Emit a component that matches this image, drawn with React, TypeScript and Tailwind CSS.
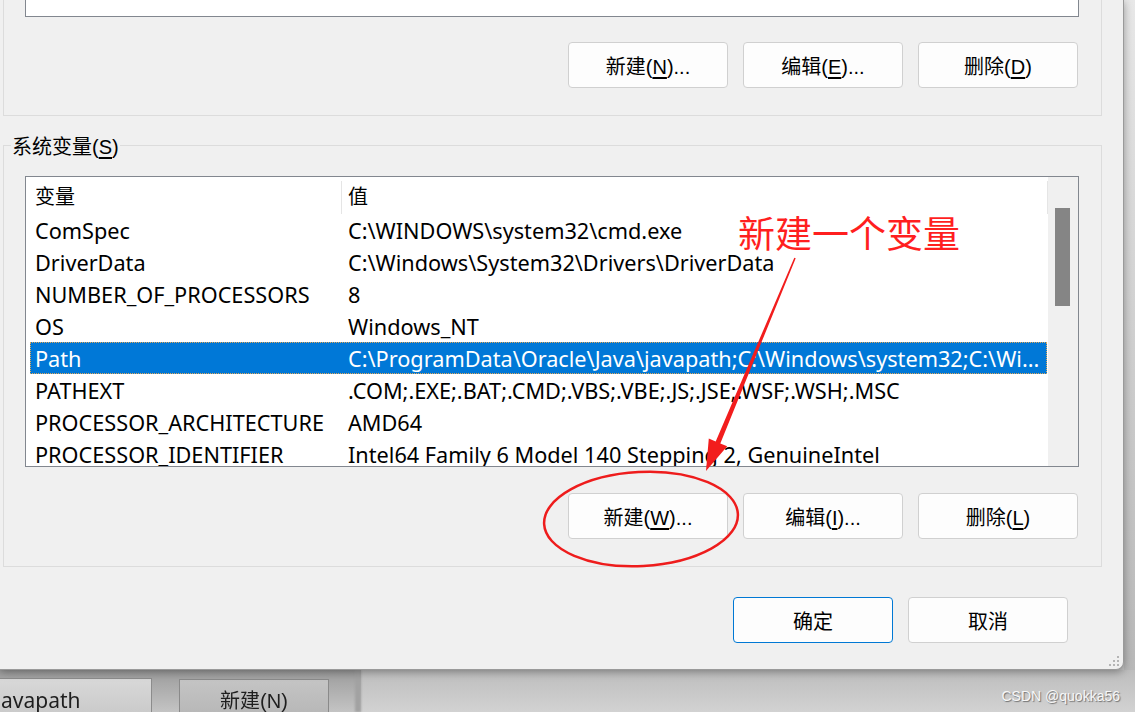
import type { ReactNode } from 'react';

const rows: [string, string][] = [
  ['ComSpec', 'C:\\WINDOWS\\system32\\cmd.exe'],
  ['DriverData', 'C:\\Windows\\System32\\Drivers\\DriverData'],
  ['NUMBER_OF_PROCESSORS', '8'],
  ['OS', 'Windows_NT'],
  ['Path', 'C:\\ProgramData\\Oracle\\Java\\javapath;C:\\Windows\\system32;C:\\Wi...'],
  ['PATHEXT', '.COM;.EXE;.BAT;.CMD;.VBS;.VBE;.JS;.JSE;.WSF;.WSH;.MSC'],
  ['PROCESSOR_ARCHITECTURE', 'AMD64'],
  ['PROCESSOR_IDENTIFIER', 'Intel64 Family 6 Model 140 Stepping 2, GenuineIntel'],
];

function Btn({ children, primary }: { children: ReactNode; primary?: boolean }) {
  return (
    <button
      className={`flex h-[46px] w-[160px] items-center justify-center rounded-[4px] border bg-[#fdfdfd] pt-[3px] text-[20px] text-black ${
        primary ? 'border-[#0078d4]' : 'border-[#d0d0d0]'
      }`}
    >
      {children}
    </button>
  );
}

function Key({ k }: { k: string }) {
  return <u className="underline-offset-[3px]">{k}</u>;
}

function SystemList() {
  return (
    <div className="mt-[18px] flex h-[291px] overflow-hidden border border-[#82878f] bg-white">
      <div className="flex w-[1022px] flex-col">
        <div className="flex h-[37px] shrink-0 items-center pt-[3px]">
          <div className="w-[315px] pl-[9px]">变量</div>
          <div className="h-[33px] w-px bg-[#e5e5e5]" />
          <div className="flex-1 pl-[6px]">值</div>
          <div className="h-[33px] w-px bg-[#e5e5e5]" />
        </div>
        {rows.map(([name, value]) => {
          const selected = name === 'Path';
          return (
            <div
              key={name}
              className={`ml-[4px] mr-[1px] flex h-[32px] shrink-0 items-center whitespace-nowrap pt-[2px] font-['Noto_Sans','Noto_Sans_CJK_SC',sans-serif] text-[21.7px] leading-[30px] ${
                selected ? 'bg-[#0078d7] text-white outline-1 -outline-offset-1 outline-dotted outline-[#e0a85a]' : ''
              }`}
            >
              <div className="w-[311px] pl-[5px]">{name}</div>
              <div className="flex-1 overflow-hidden pl-[7px]">{value}</div>
            </div>
          );
        })}
      </div>
      <div className="w-[30px] bg-[#f0f0f0]">
        <div className="ml-[7px] mt-[31px] h-[98px] w-[15px] bg-[#858585]" />
      </div>
    </div>
  );
}

function Dialog() {
  return (
    <div className="relative z-10 flex h-[670px] w-[1124px] shrink-0 flex-col rounded-br-[8px] border-r border-b border-[#9a9a9a] bg-[#f0f0f0] shadow-[0_2px_8px_rgba(0,0,0,0.35)]">
      {/* 用户变量 (top part cut off) */}
      <div className="ml-[3px] w-[1099px] border-x border-b border-[#dcdcdc] pb-[27px] pl-[21px] pr-[22px]">
        <div className="h-[17px] border-x border-b border-[#82878f] bg-white" />
        <div className="mr-[1px] mt-[25px] flex justify-end gap-[15px]">
          <Btn>
            新建(<Key k="N" />)...
          </Btn>
          <Btn>
            编辑(<Key k="E" />)...
          </Btn>
          <Btn>
            删除(<Key k="D" />)
          </Btn>
        </div>
      </div>

      {/* 系统变量 */}
      <div className="ml-[3px] mt-[29px] w-[1099px] border border-[#dcdcdc] pb-[27px] pl-[21px] pr-[22px]">
        <div className="-mt-[12px] ml-[-14px] w-fit bg-[#f0f0f0] px-[1px] pt-[2px] leading-[22px]">
          系统变量(<Key k="S" />)
        </div>
        <SystemList />
        <div className="mr-[1px] mt-[26px] flex justify-end gap-[15px]">
          <Btn>
            新建(<Key k="W" />)...
          </Btn>
          <Btn>
            编辑(<Key k="I" />)...
          </Btn>
          <Btn>
            删除(<Key k="L" />)
          </Btn>
        </div>
      </div>

      <div className="mt-[30px] flex justify-end gap-[15px] pr-[55px]">
        <Btn primary>确定</Btn>
        <Btn>取消</Btn>
      </div>

      <svg className="absolute bottom-[2px] right-[3px]" width="12" height="12" viewBox="0 0 12 12">
        <g fill="#b5b5b5">
          <rect x="9" y="1" width="2" height="2" />
          <rect x="5" y="5" width="2" height="2" />
          <rect x="9" y="5" width="2" height="2" />
          <rect x="1" y="9" width="2" height="2" />
          <rect x="5" y="9" width="2" height="2" />
          <rect x="9" y="9" width="2" height="2" />
        </g>
      </svg>
    </div>
  );
}

function BackWindow() {
  return (
    <div className="flex h-[42px] bg-linear-to-b from-[#9c9c9c] to-[#c4c4c4]">
      <div className="mt-[8px] h-[40px] w-[152px] border border-l-0 border-[#8c8c8c] bg-linear-to-b from-[#d8d8d8] to-[#c9c9c9] pl-[1px] pt-[4px] font-['Noto_Sans',sans-serif] text-[21px] leading-[34px] text-[#1e1e1e] blur-[0.4px]">
        avapath
      </div>
      <div className="ml-[27px] mt-[9px] h-[40px] w-[150px] border border-[#8a8a8a] bg-linear-to-b from-[#c4c4c4] to-[#b6b6b6] pt-[4px] text-center leading-[34px] text-[#1e1e1e] blur-[0.4px]">
        新建(N)
      </div>
      <div className="ml-[26px] w-[6px] bg-[#a2a2a2] blur-[1px]" />
      <div className="flex flex-1 items-end justify-end bg-linear-to-b from-[#bdbdbd] to-[#d2d2d2] pb-[8px] pr-[15px]">
        <span className="text-[14px] leading-[16px] text-[#f7f7f7] [text-shadow:1px_1px_1px_#6f6f6f]">
          CSDN @quokka56
        </span>
      </div>
    </div>
  );
}

export default function App() {
  return (
    <div className="relative h-[712px] w-[1135px] overflow-hidden bg-[#c4c4c4] font-['Liberation_Sans','Noto_Sans_CJK_SC',sans-serif] text-[20px] text-black">
      <div className="flex h-[670px]">
        <Dialog />
        <div className="flex-1 bg-linear-to-b from-[#e8e8e8] to-[#b8b8b8]" />
      </div>
      <BackWindow />

      {/* red annotation drawn on top of the screenshot */}
      <div className="pointer-events-none absolute left-[738px] top-[214px] z-20 font-['Noto_Sans_CJK_SC',sans-serif] text-[37px] leading-[37px] text-[#ff1f1f]">
        新建一个变量
      </div>
      <svg className="pointer-events-none absolute inset-0 z-20" width="1135" height="712" viewBox="0 0 1135 712">
        <polygon
          fill="#f21d1d"
          points="794.3,257.7 795.7,258.3 720.3,443.4 727.2,446.2 706,471 708.8,438.6 715.7,441.4"
        />
        <ellipse
          cx="641"
          cy="519"
          rx="97"
          ry="47"
          fill="none"
          stroke="#ee1c1c"
          strokeWidth="2.5"
          transform="rotate(-3 641 519)"
        />
      </svg>
    </div>
  );
}
